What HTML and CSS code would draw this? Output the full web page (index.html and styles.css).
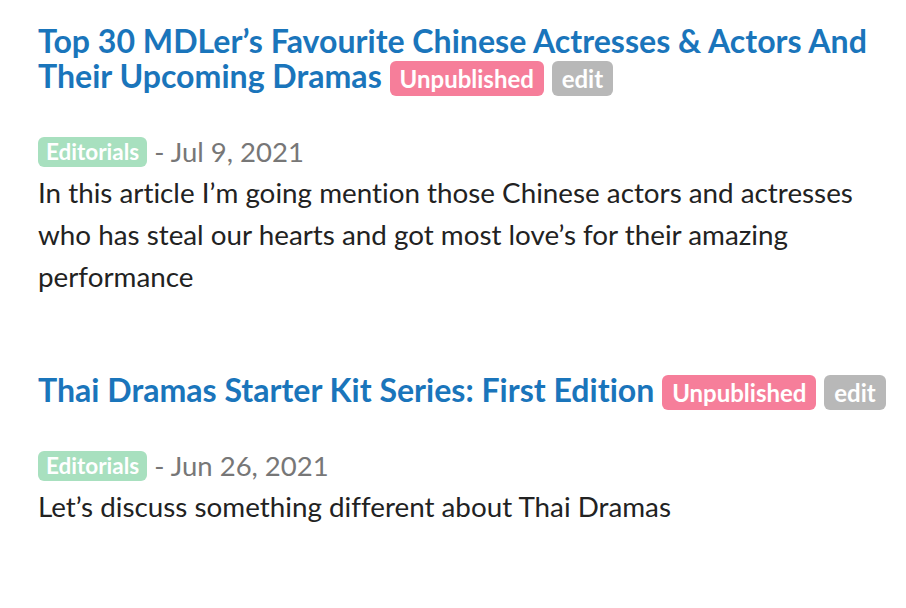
FILE: index.html
```html
<!DOCTYPE html>
<html>
<head>
<meta charset="utf-8">
<link rel="stylesheet" href="styles.css">
</head>
<body>
<div class="list">
  <article class="post">
    <h2 class="title"><a href="#">Top 30 MDLer’s Favourite Chinese Actresses &amp; Actors And Their Upcoming Dramas</a> <span class="badge pink">Unpublished</span> <span class="badge gray">edit</span></h2>
    <div class="meta"><span class="tag">Editorials</span> - Jul 9, 2021</div>
    <p class="desc">In this article I’m going mention those Chinese actors and actresses who has steal our hearts and got most love’s for their amazing performance</p>
  </article>
  <article class="post">
    <h2 class="title"><a href="#">Thai Dramas Starter Kit Series: First Edition</a> <span class="badge pink">Unpublished</span> <span class="badge gray">edit</span></h2>
    <div class="meta"><span class="tag">Editorials</span> - Jun 26, 2021</div>
    <p class="desc">Let’s discuss something different about Thai Dramas</p>
  </article>
</div>
</body>
</html>
```
FILE: styles.css
```css
html, body {
  margin: 0;
  padding: 0;
  background: #fff;
}
body {
  font-family: Lato, "Noto Sans", sans-serif;
  color: #222;
  font-variant-ligatures: none;
}
.list {
  padding: 23px 12px 0 38px;
}
.post {
  margin-bottom: 74px;
}
.title {
  margin: 0;
  font-size: 32.1px;
  line-height: 35px;
  font-weight: 700;
}
.title a {
  color: #1a75bb;
  text-decoration: none;
}
.badge {
  display: inline-block;
  color: #fff;
  font-size: 24px;
  line-height: 35px;
  padding: 0 10px;
  border-radius: 6px;
  vertical-align: 0;
}
.pink { background: #f67e9a; }
.gray { background: #b8b8b8; }
.meta {
  margin-top: 35px;
  font-size: 27.5px;
  line-height: 41px;
  color: #777;
}
.tag {
  display: inline-block;
  background: #a8e0bf;
  color: #fff;
  font-weight: 700;
  font-size: 22.5px;
  line-height: 30px;
  padding: 0 8px;
  border-radius: 6px;
  vertical-align: 2px;
}
.desc {
  margin: 0;
  font-size: 27.8px;
  line-height: 42px;
  color: #222;
}
```
